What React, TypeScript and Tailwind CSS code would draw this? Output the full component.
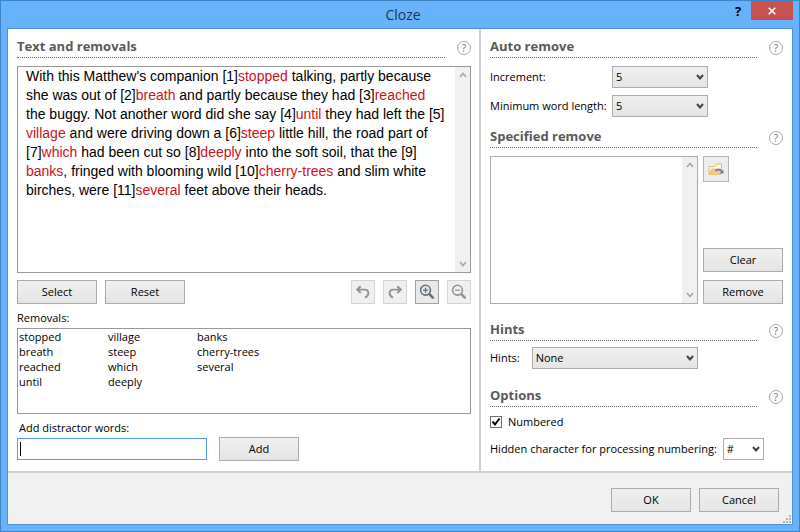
import { Fragment, useState } from "react";
import type { ReactNode } from "react";

type Part = { text: string; removed?: string };

const passage: Part[] = [
  { text: "With this Matthew's companion [1]", removed: "stopped" },
  { text: " talking, partly because she was out of [2]", removed: "breath" },
  { text: " and partly because they had [3]", removed: "reached" },
  { text: " the buggy. Not another word did she say [4]", removed: "until" },
  { text: " they had left the [5]", removed: "village" },
  { text: " and were driving down a [6]", removed: "steep" },
  { text: " little hill, the road part of [7]", removed: "which" },
  { text: " had been cut so [8]", removed: "deeply" },
  { text: " into the soft soil, that the [9]", removed: "banks" },
  { text: ", fringed with blooming wild [10]", removed: "cherry-trees" },
  { text: " and slim white birches, were [11]", removed: "several" },
  { text: " feet above their heads." },
];

const removals = passage.flatMap((part) => (part.removed ? [part.removed] : []));

function Chevron({ up = false, className }: { up?: boolean; className?: string }) {
  return (
    <svg viewBox="0 0 8 6" className={className} fill="none" stroke="currentColor">
      <path d={up ? "M1 5 4 1.5 7 5" : "M1 1 4 4.5 7 1"} />
    </svg>
  );
}

function SectionHeading({ children }: { children: ReactNode }) {
  return (
    <div className="flex items-center justify-between">
      <h2 className="h-[21px] flex-1 border-b border-dotted border-[#707070] text-[13px] leading-[18px] font-bold text-[#5a5a5a]">
        {children}
      </h2>
      <button
        type="button"
        aria-label="Help"
        className="ml-3 flex size-[14px] items-center justify-center rounded-full border border-[#a8a8a8] text-[10px] leading-none text-[#707070]"
      >
        ?
      </button>
    </div>
  );
}

function PushButton({ children }: { children: ReactNode }) {
  return (
    <button
      type="button"
      className="h-6 w-20 border border-[#acacac] bg-linear-to-b from-[#f0f0f0] to-[#e4e4e4]"
    >
      {children}
    </button>
  );
}

function ToolButton({ label, disabled, children }: { label: string; disabled?: boolean; children: ReactNode }) {
  return (
    <button
      type="button"
      aria-label={label}
      disabled={disabled}
      className="flex size-6 items-center justify-center border border-[#a0a0a0] bg-[#e9e9e9] text-[#6b7076] disabled:border-[#d4d4d4] disabled:bg-[#f0f0f0] disabled:text-[#929292]"
    >
      {children}
    </button>
  );
}

function Dropdown({ id, options, className }: { id: string; options: string[]; className: string }) {
  return (
    <div className="relative">
      <select
        id={id}
        className={`block h-[22px] appearance-none border border-[#acacac] pr-4 pl-[3px] leading-4 ${className}`}
      >
        {options.map((option) => (
          <option key={option}>{option}</option>
        ))}
      </select>
      <Chevron className="pointer-events-none absolute top-2 right-1 h-[6px] w-2 stroke-2 text-[#444]" />
    </div>
  );
}

function ScrollBar() {
  return (
    <div className="flex w-[15px] shrink-0 flex-col items-center justify-between bg-[#f0f0f0] py-[5px] text-[#a6a6a6]">
      <Chevron up className="h-[6px] w-2 stroke-[1.5]" />
      <Chevron className="h-[6px] w-2 stroke-[1.5]" />
    </div>
  );
}

function Magnifier({ plus = false }: { plus?: boolean }) {
  return (
    <svg viewBox="0 0 16 16" className="size-4" fill="none" stroke="currentColor">
      <circle cx="6.5" cy="6.2" r="4.9" strokeWidth="1.6" />
      <path d="m10.4 10.2 3.4 3.4" strokeWidth="2.6" strokeLinecap="round" />
      <path d={plus ? "M4 6.2h5M6.5 3.7v5" : "M4 6.2h5"} stroke={plus ? "#3c78b4" : "currentColor"} strokeWidth="1.2" />
    </svg>
  );
}

function Arrow({ redo = false }: { redo?: boolean }) {
  return (
    <svg viewBox="0 0 16 16" className="size-4" fill="none" stroke="currentColor" strokeWidth="1.9">
      {redo ? (
        <path d="M10.3 2.2 13.8 5.6 10.3 9M13.4 5.6H6.4c-4.8 0-5.1 6-.4 8" />
      ) : (
        <path d="M5.7 2.2 2.2 5.6 5.7 9M2.6 5.6h7c4.8 0 5.1 6 .4 8" />
      )}
    </svg>
  );
}

function OpenFolder() {
  return (
    <svg viewBox="0 0 16 14" className="h-[14px] w-4" fill="none">
      <path d="M1 12.5V4.5h5.5l2-2.5h5v5" fill="#fdf6e6" stroke="#e8b970" />
      <path d="M1 12.5 3.5 7h10l-1 5.5z" fill="#f0cb8b" stroke="#e8b970" strokeWidth=".8" />
      <path d="M7.5 9c1.5-2 4.5-2 6 .3" stroke="#5b7dbd" strokeWidth="1.8" />
      <path d="M15.5 7.5v4h-4z" fill="#5b7dbd" />
    </svg>
  );
}

function TitleBar() {
  return (
    <header className="flex h-[27px] items-start">
      <h1 className="flex-1 pl-20 text-center text-sm leading-[27px] text-[#1d3550]">Cloze</h1>
      <button type="button" aria-label="Help" className="h-5 w-[26px] text-[13px] leading-5 font-bold text-black">
        ?
      </button>
      <button type="button" aria-label="Close" className="mr-[6px] flex h-[19px] w-[42px] items-center justify-center bg-[#c75050] text-white">
        <svg viewBox="0 0 8 8" className="size-2" stroke="currentColor" strokeWidth="1.6">
          <path d="m.7.7 6.6 6.6M7.3.7.7 7.3" />
        </svg>
      </button>
    </header>
  );
}

function TextPanel() {
  const [word, setWord] = useState("");

  return (
    <section className="flex w-[473px] shrink-0 flex-col border-r-2 border-[#cfcfcf] pt-2 pr-2 pb-[10px] pl-[9px]">
      <SectionHeading>Text and removals</SectionHeading>

      <div className="mt-2 flex h-[207px] border border-[#999]">
        <p className="flex-1 pr-[9px] pl-2 font-['Liberation_Sans',Arial,sans-serif] text-sm leading-[19px]">
          {passage.map((part) => (
            <Fragment key={part.text}>
              {part.text}
              <wbr />
              <span className="text-[#d01020]">{part.removed}</span>
            </Fragment>
          ))}
        </p>
        <ScrollBar />
      </div>

      <div className="mt-[7px] flex items-center justify-between">
        <div className="flex gap-2">
          <PushButton>Select</PushButton>
          <PushButton>Reset</PushButton>
        </div>
        <div className="flex gap-2">
          <ToolButton label="Undo" disabled>
            <Arrow />
          </ToolButton>
          <ToolButton label="Redo" disabled>
            <Arrow redo />
          </ToolButton>
          <ToolButton label="Zoom in">
            <Magnifier plus />
          </ToolButton>
          <ToolButton label="Zoom out" disabled>
            <Magnifier />
          </ToolButton>
        </div>
      </div>

      <h3 className="mt-[6px] leading-4">Removals:</h3>
      <ul className="mt-[2px] grid h-[86px] auto-cols-[89px] grid-flow-col grid-rows-[repeat(4,15px)] border border-[#999] pl-px leading-[15px]">
        {removals.map((item) => (
          <li key={item}>{item}</li>
        ))}
      </ul>

      <label htmlFor="distractor" className="mt-[6px] pl-[2px] leading-4">
        Add distractor words:
      </label>
      <div className="mt-px flex items-center gap-3">
        <div className="relative">
          <input
            id="distractor"
            type="text"
            value={word}
            onChange={(e) => setWord(e.target.value)}
            className="block h-[22px] w-[190px] border border-[#569de5] bg-white px-1 outline-none"
          />
          {word === "" && <span className="absolute top-1 left-[3px] h-[14px] w-px bg-black" />}
        </div>
        <PushButton>Add</PushButton>
      </div>
    </section>
  );
}

function SettingsPanel() {
  return (
    <section className="flex flex-1 flex-col pt-2 pr-[9px] pl-[9px]">
      <SectionHeading>Auto remove</SectionHeading>
      <div className="mt-2 grid grid-cols-[122px_auto] items-center justify-start gap-y-[7px]">
        <label htmlFor="increment">Increment:</label>
        <Dropdown id="increment" options={["5", "6", "7", "8"]} className="w-24 bg-linear-to-b from-[#f0f0f0] to-[#e4e4e4]" />
        <label htmlFor="min-length" className="whitespace-nowrap">Minimum word length:</label>
        <Dropdown id="min-length" options={["5", "6", "7", "8"]} className="w-24 bg-linear-to-b from-[#f0f0f0] to-[#e4e4e4]" />
      </div>

      <div className="mt-[10px]">
        <SectionHeading>Specified remove</SectionHeading>
      </div>
      <div className="mt-2 flex justify-between">
        <div className="flex h-[148px] w-[208px] border border-[#acacac]">
          <textarea aria-label="Words to remove" className="min-w-0 flex-1 resize-none outline-none" />
          <ScrollBar />
        </div>
        <div className="flex flex-col gap-2">
          <button
            type="button"
            aria-label="Open word list"
            className="mb-auto flex size-[26px] items-center justify-center border border-[#b4b4b4] bg-[#ededed]"
          >
            <OpenFolder />
          </button>
          <PushButton>Clear</PushButton>
          <PushButton>Remove</PushButton>
        </div>
      </div>

      <div className="mt-4">
        <SectionHeading>Hints</SectionHeading>
      </div>
      <div className="mt-[6px] flex items-center gap-3">
        <label htmlFor="hints">Hints:</label>
        <Dropdown id="hints" options={["None", "First letter", "Word list"]} className="w-[166px] bg-linear-to-b from-[#f0f0f0] to-[#e4e4e4]" />
      </div>

      <div className="mt-[17px]">
        <SectionHeading>Options</SectionHeading>
      </div>
      <label className="mt-[7px] flex items-center gap-[6px] leading-4">
        <span className="relative">
          <input
            type="checkbox"
            defaultChecked
            className="peer block size-3 appearance-none border border-[#707070] bg-white"
          />
          <svg viewBox="0 0 12 12" className="pointer-events-none absolute inset-0 hidden size-3 peer-checked:block" fill="none" stroke="black" strokeWidth="2">
            <path d="m2.5 5.5 2.5 3 4.5-6" />
          </svg>
        </span>
        Numbered
      </label>
      <div className="mt-2 flex items-center gap-[6px]">
        <label htmlFor="hidden-char" className="whitespace-nowrap">
          Hidden character for processing numbering:
        </label>
        <Dropdown id="hidden-char" options={["#", "*", "_"]} className="w-[41px] bg-white" />
      </div>
    </section>
  );
}

export default function App() {
  return (
    <div className="flex min-h-screen flex-col border border-[#4084c8] bg-[#66b3fb] font-['Open_Sans','Noto_Sans',sans-serif] text-[11px] text-black">
      <TitleBar />
      <div className="mx-[6px] mb-[6px] flex flex-1 flex-col border border-[#4d93db] bg-white">
        <main className="flex flex-1">
          <TextPanel />
          <SettingsPanel />
        </main>
        <footer className="relative flex justify-end gap-2 border-t-2 border-[#cfcfcf] bg-[#f0f0f0] pt-[15px] pr-[13px] pb-3">
          <PushButton>OK</PushButton>
          <PushButton>Cancel</PushButton>
          <svg viewBox="0 0 8 8" className="absolute right-px bottom-px size-2" fill="#b4b4b4">
            <path d="M6 0h2v2H6zM3 3h2v2H3zM6 3h2v2H6zM0 6h2v2H0zM3 6h2v2H3zM6 6h2v2H6z" />
          </svg>
        </footer>
      </div>
    </div>
  );
}
